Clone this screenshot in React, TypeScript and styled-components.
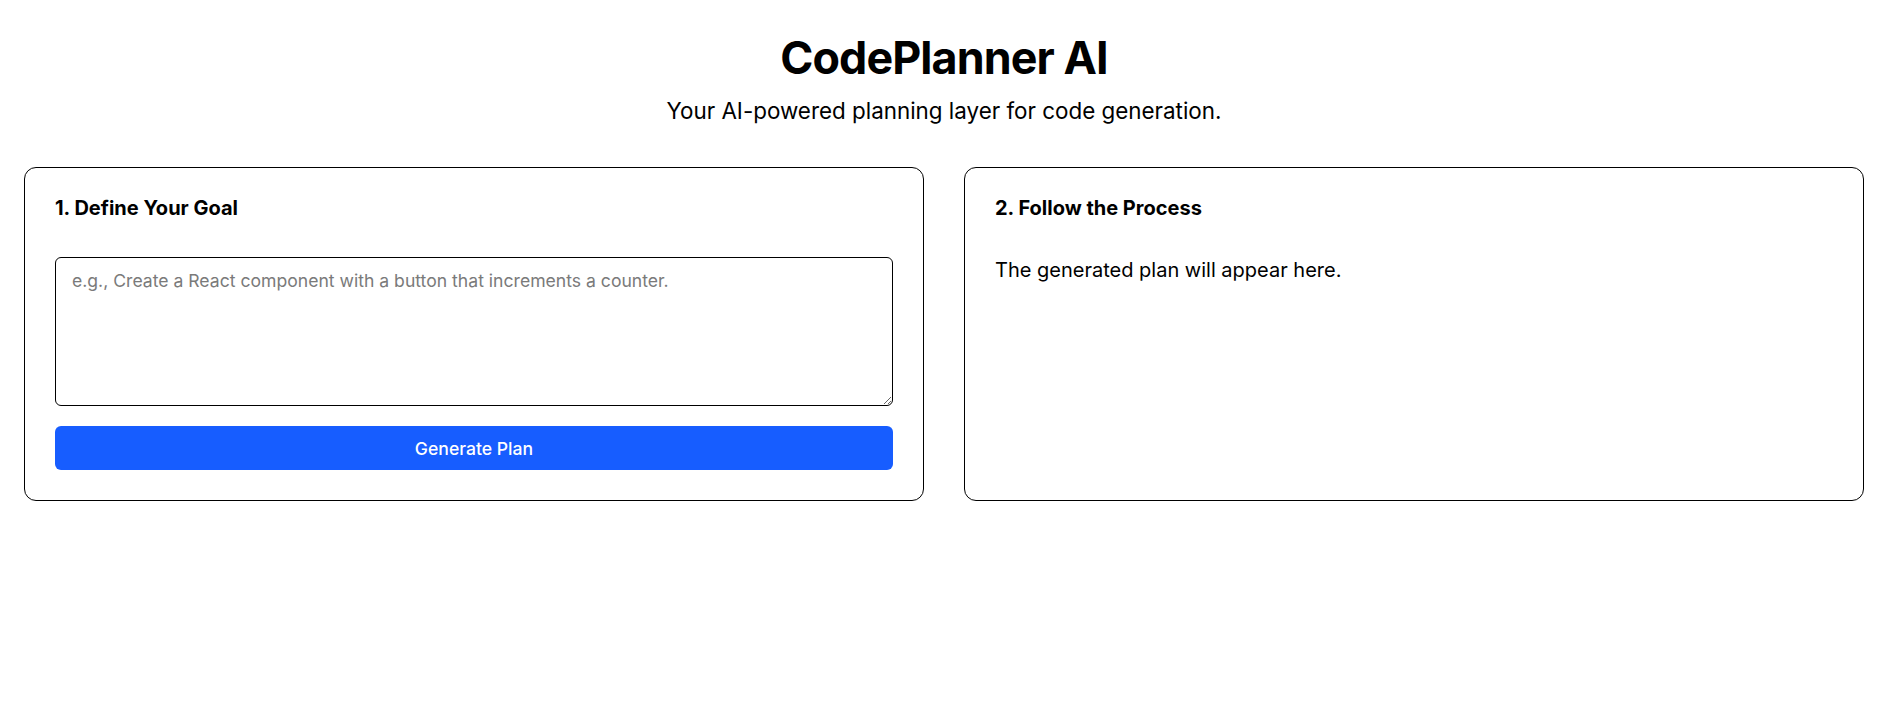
import React from "react"
import styled, { createGlobalStyle } from "styled-components"

const GlobalStyle = createGlobalStyle`
  html, body {
    margin: 0;
    padding: 0;
    background: #fff;
  }

  body {
    font-family: Inter, "Noto Sans", sans-serif;
    color: #000;
  }

  * {
    box-sizing: border-box;
  }
`

const Page = styled.div`
  padding: 31px 38px 40px 24px;
`

const Header = styled.header`
  text-align: center;
`

const Title = styled.h1`
  margin: 0 0 12px;
  font-size: 2.8rem;
  font-weight: 700;
  letter-spacing: -0.02em;
`

const Subtitle = styled.p`
  margin: 0;
  font-size: 1.4rem;
`

const Panels = styled.main`
  display: grid;
  grid-template-columns: 1fr 1fr;
  gap: 40px;
  margin-top: 43px;
`

const Panel = styled.section`
  border: 1px solid #000;
  border-radius: 12px;
  padding: 30px;
  display: flex;
  flex-direction: column;
`

const PanelTitle = styled.h2<{ $gap: number }>`
  margin: 0 0 ${(p) => p.$gap}px;
  font-size: 1.25rem;
  line-height: 1;
  font-weight: 700;
`

const GoalInput = styled.textarea`
  display: block;
  width: 100%;
  height: 149px;
  padding: 12px 16px;
  border: 1px solid #000;
  border-radius: 6px;
  font-family: inherit;
  font-size: 1.1rem;
  resize: vertical;
  outline: none;

  &::placeholder {
    color: #7a7a7a;
  }
`

const GenerateButton = styled.button`
  margin-top: 20px;
  height: 44px;
  width: 100%;
  border: none;
  border-radius: 6px;
  background: #175dff;
  color: #fff;
  font-family: inherit;
  font-size: 1.1rem;
  font-weight: 500;
  cursor: pointer;

  &:hover {
    background: #0f4fe6;
  }
`

const Placeholder = styled.p`
  margin: 0;
  font-size: 1.25rem;
`

export default function App() {
  const [goal, setGoal] = React.useState("")

  return (
    <>
      <GlobalStyle />
      <Page>
        <Header>
          <Title>CodePlanner AI</Title>
          <Subtitle>Your AI-powered planning layer for code generation.</Subtitle>
        </Header>
        <Panels>
          <Panel>
            <PanelTitle $gap={39}>1. Define Your Goal</PanelTitle>
            <GoalInput
              value={goal}
              onChange={(e) => setGoal(e.target.value)}
              placeholder="e.g., Create a React component with a button that increments a counter."
            />
            <GenerateButton>Generate Plan</GenerateButton>
          </Panel>
          <Panel>
            <PanelTitle $gap={40}>2. Follow the Process</PanelTitle>
            <Placeholder>The generated plan will appear here.</Placeholder>
          </Panel>
        </Panels>
      </Page>
    </>
  )
}
